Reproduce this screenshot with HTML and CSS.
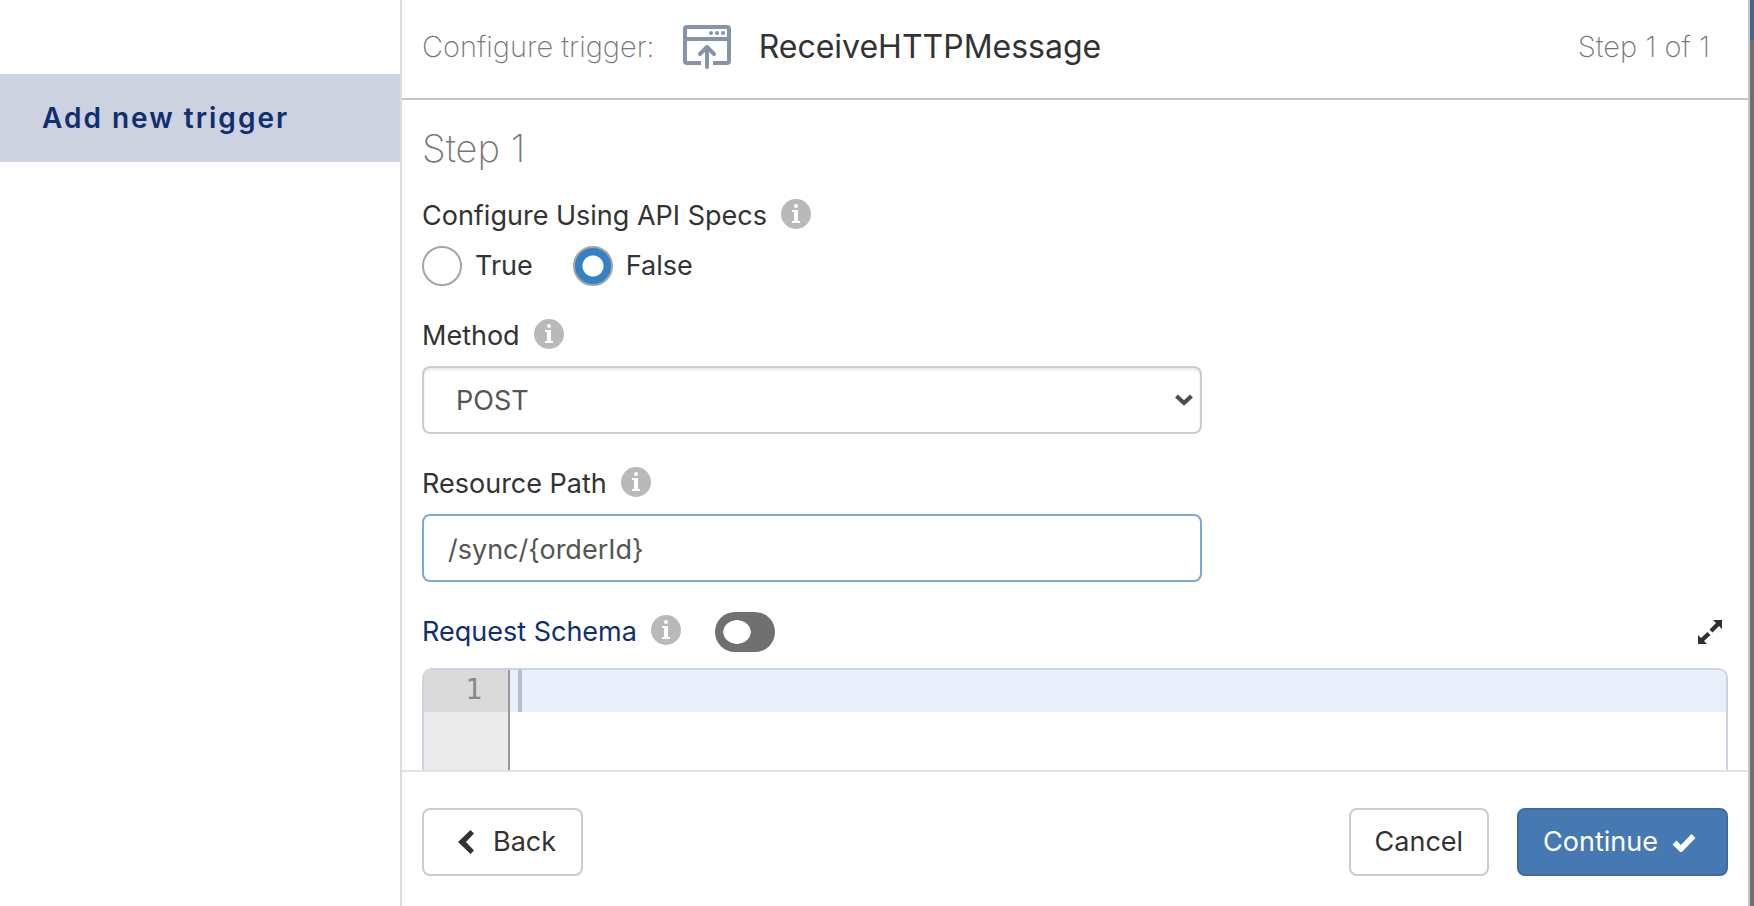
FILE: index.html
```html
<!DOCTYPE html>
<html lang="en">
<head>
<meta charset="utf-8">
<meta name="viewport" content="width=device-width, initial-scale=1">
<title>Configure trigger</title>
<link rel="stylesheet" href="styles.css">
</head>
<body>
<svg class="sprite" aria-hidden="true">
  <symbol id="info" viewBox="0 0 30 30">
    <circle cx="15" cy="15" r="15" fill="#b9b9b9"/>
    <circle cx="15" cy="7" r="2" fill="#fff"/>
    <path d="M11 11h6v11h2v2h-8v-2h2v-9h-2z" fill="#fff"/>
  </symbol>
</svg>
<div class="app">
  <nav class="sidebar">
    <a class="sidebar-item" href="#trigger">Add new trigger</a>
  </nav>
  <main class="panel">
    <header class="panel-header">
      <span class="header-label">Configure trigger:</span>
      <svg class="trigger-icon" viewBox="0 0 48 44" fill="none" stroke="#8793ab" stroke-width="4" aria-hidden="true">
        <path d="M18 38H4a2 2 0 0 1-2-2V4a2 2 0 0 1 2-2h40a2 2 0 0 1 2 2v32a2 2 0 0 1-2 2H30M2 14h44"/>
        <path d="M24 42V23M17 29l7-7 7 7" stroke-linecap="round" stroke-linejoin="round"/>
        <g fill="#8793ab" stroke="none"><circle cx="28" cy="8" r="2"/><circle cx="34" cy="8" r="2"/><circle cx="40" cy="8" r="2"/></g>
      </svg>
      <h1 class="header-title">ReceiveHTTPMessage</h1>
      <span class="header-step">Step 1 of 1</span>
    </header>
    <form class="panel-body" id="trigger">
      <h2 class="step-title">Step 1</h2>
      <fieldset class="field">
        <legend class="label-row">Configure Using API Specs <svg class="info"><use href="#info"/></svg></legend>
        <div class="radios">
          <label class="radio"><input type="radio" name="specs" value="true">True</label>
          <label class="radio"><input type="radio" name="specs" value="false" checked>False</label>
        </div>
      </fieldset>
      <div class="field">
        <div class="label-row"><label for="method">Method</label><svg class="info"><use href="#info"/></svg></div>
        <div class="select-wrap">
          <select class="control select" id="method"><option>POST</option><option>GET</option><option>PUT</option><option>DELETE</option></select>
          <svg class="select-arrow" viewBox="0 0 18 12" aria-hidden="true"><path d="M1.500 2L9 9L16.500 2" fill="none" stroke="#4d4d4d" stroke-width="4.200"/></svg>
        </div>
      </div>
      <div class="field">
        <div class="label-row"><label for="path">Resource Path</label><svg class="info"><use href="#info"/></svg></div>
        <input class="control path" id="path" type="text" value="/sync/{orderId}">
      </div>
      <div class="schema">
        <div class="label-row">
          <label class="schema-label" for="schema">Request Schema</label><svg class="info"><use href="#info"/></svg>
          <input class="toggle" type="checkbox" aria-label="Use request schema">
          <button class="expand" type="button" aria-label="Expand editor">
            <svg viewBox="0 0 24 24" width="24" height="24"><path d="M15 0h9v9l-3-3-6.500 6.500-3-3L18 3zM9 24H0v-9l3 3 6.500-6 3 3L6 21z" fill="#2f2f2f"/></svg>
          </button>
        </div>
        <div class="editor">
          <div class="gutter"><div class="line-number">1</div></div>
          <div class="code"><span class="caret"></span><textarea id="schema" class="code-input" rows="3"></textarea></div>
        </div>
      </div>
    </form>
    <footer class="panel-footer">
      <button class="button back" type="button"><svg viewBox="0 0 17 26" width="17" height="26"><path d="M12.500 1L16 4.500 8 13l8 8.500-3.500 3.500L0 13z" fill="#333"/></svg>Back</button>
      <button class="button cancel" type="button">Cancel</button>
      <button class="button continue" type="button">Continue<svg viewBox="0 0 24 19" width="24" height="19"><path d="M2.500 9.500l6.500 6.500L21.500 3" fill="none" stroke="#fff" stroke-width="5.500"/></svg></button>
    </footer>
  </main>
  <div class="backdrop"></div>
</div>
</body>
</html>
```
FILE: styles.css
```css
* { box-sizing: border-box; }
body {
  margin: 0;
  background: #fff;
  color: #333;
  font: 27px/40px Inter, "Liberation Sans", sans-serif;
}
.sprite { position: absolute; width: 0; height: 0; }
.app { display: flex; height: 100vh; overflow: hidden; }

.sidebar { flex: 0 0 400px; padding-top: 74px; }
.sidebar-item {
  display: block;
  padding: 24px 42px;
  background: #ccd2df;
  color: #0f2f71;
  font-size: 28px;
  font-weight: 600;
  letter-spacing: 2px;
  text-decoration: none;
}

.panel {
  display: flex;
  flex: 1;
  flex-direction: column;
  min-width: 0;
  border-left: 2px solid #dcdcde;
  border-right: 2px solid #c6c6c6;
}
.panel-header {
  display: flex;
  align-items: center;
  height: 100px;
  padding: 0 38px 4px 20px;
  border-bottom: 2px solid #c6c6c6;
}
.header-label, .header-step { color: #777; font-size: 29px; font-weight: 200; }
.trigger-icon { width: 48px; height: 44px; margin: 0 28px; }
.header-title { margin: 0; font-size: 32px; font-weight: 400; }
.header-step { margin-left: auto; }

.panel-body { flex: 1; min-height: 0; margin: 0; padding: 24px 20px 0; overflow: hidden; }
.step-title { margin: 0 0 24px; color: #777; font-size: 38px; font-weight: 200; line-height: 48px; }
.field { width: 100%; max-width: 780px; min-width: 0; margin: 0 0 30px; padding: 0; border: 0; }
.label-row { display: flex; align-items: center; gap: 14px; height: 40px; margin-bottom: 10px; padding: 0; }
.info { flex: none; width: 30px; height: 30px; margin-bottom: 4px; }

.radios { display: flex; gap: 40px; }
.radio { display: flex; gap: 13px; }
.radio input {
  width: 40px;
  height: 40px;
  margin: 0;
  border: 2px solid #a5a5a5;
  border-radius: 50%;
  background: #fff;
  appearance: none;
}
.radio input:checked { background: radial-gradient(circle, #fff 10px, #3581c6 11px); }

.control {
  display: block;
  width: 100%;
  height: 68px;
  border: 2px solid #ccc;
  border-radius: 8px;
  background: #fff;
  color: #555;
  font: inherit;
}
.select-wrap { position: relative; }
.select { padding: 2px 32px 0; appearance: none; box-shadow: inset 0 2px 3px rgba(0, 0, 0, .09); }
.select-arrow { position: absolute; top: 28px; right: 9px; width: 18px; height: 12px; pointer-events: none; }
.path { padding: 2px 24px 0; border-color: #78aada; outline: 0; }

.schema .label-row { margin-bottom: 16px; }
.schema-label { color: #0f2f71; }
.toggle {
  width: 60px;
  height: 40px;
  margin: 0 0 0 20px;
  border-radius: 20px;
  background: radial-gradient(ellipse 14px 12px at 22px 20px, #fff 96%, #707070 100%);
  appearance: none;
}
.expand { display: flex; margin-left: auto; padding: 6px; border: 0; background: none; }
.editor {
  display: flex;
  height: 300px;
  border: 2px solid #ccd2df;
  border-radius: 10px;
  overflow: hidden;
}
.gutter { flex: 0 0 86px; border-right: 2px solid #999; background: #ebebeb; }
.line-number {
  height: 42px;
  padding-right: 26px;
  background: #dadada;
  color: #888;
  font: 28px/40px "DejaVu Sans Mono", monospace;
  text-align: right;
}
.code { display: flex; flex: 1; padding-left: 8px; background: linear-gradient(#e9f0fc 42px, #fff 42px); }
.caret { width: 4px; height: 42px; background: #b5bec9; }
.code-input { flex: 1; padding: 0; border: 0; outline: 0; background: none; resize: none; font: 28px/42px "DejaVu Sans Mono", monospace; }

.panel-footer { display: flex; gap: 28px; padding: 36px 20px 30px; border-top: 2px solid #e3e3e5; }
.button {
  display: flex;
  align-items: center;
  justify-content: center;
  height: 68px;
  padding: 0 24px;
  border: 2px solid #ccc;
  border-radius: 8px;
  background: #fff;
  color: #333;
  font: inherit;
}
.back { gap: 18px; margin-right: auto; padding: 0 25px 0 34px; }
.continue { gap: 14px; padding-right: 30px; border-color: #3d6b9f; background: #4679b2; color: #fff; }

.backdrop { flex: 0 0 4px; background: linear-gradient(#45658c 40px, #6f6f6f 40px); }
```
